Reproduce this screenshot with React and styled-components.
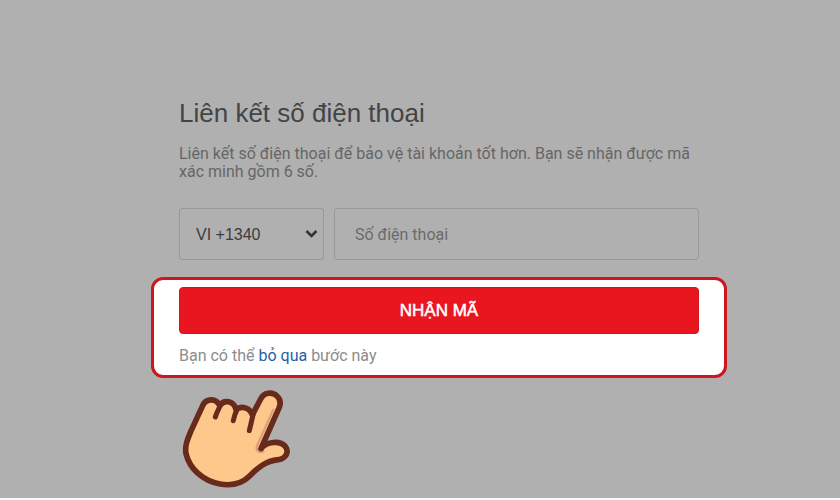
import { useState } from 'react'
import styled, { createGlobalStyle } from 'styled-components'

const GlobalStyle = createGlobalStyle`
  *, *::before, *::after {
    box-sizing: border-box;
  }
  body {
    margin: 0;
    background: #fbfbfb;
    font-family: "Liberation Sans", Arial, sans-serif;
    font-size: 16px;
    color: #666;
  }
`
const Page = styled.main`
  display: flex;
  justify-content: center;
  min-height: calc(100vh - 2px);
  padding: 97px 0 0 38px;
  background: #b0b0b0;
`
const Form = styled.form`
  width: 100%;
  max-width: 576px;
`
const Section = styled.div`
  padding: 0 28px;
`
const Title = styled.h1`
  margin: 0;
  font-size: 26px;
  font-weight: 400;
  line-height: 32px;
  color: #444446;
`
const Description = styled.p`
  margin: 16px 0 27px;
  font-family: Roboto, sans-serif;
  line-height: 18px;
`
const Fields = styled.div`
  display: flex;
  gap: 10px;
`
const SelectBox = styled.div`
  position: relative;
  flex: 0 0 145px;
  color: #3c3c3c;
`
const Select = styled.select`
  appearance: none;
  width: 100%;
  height: 52px;
  padding: 0 16px;
  border: 1px solid #989898;
  border-radius: 3px;
  background: transparent;
  color: inherit;
  font: inherit;
`
const Chevron = styled.svg`
  position: absolute;
  top: 21px;
  right: 6px;
  pointer-events: none;
`
const PhoneInput = styled.input`
  flex: 1;
  min-width: 0;
  height: 52px;
  padding: 0 20px;
  border: 1px solid #989898;
  border-radius: 4px;
  background: transparent;
  color: #3c3c3c;
  font: inherit;
  font-family: Roboto, sans-serif;

  &::placeholder {
    color: #6a6a6a;
    opacity: 1;
  }
`
const Highlight = styled(Section)`
  margin-top: 17px;
  padding: 7px 25px 9px;
  border: 3px solid #cb171d;
  border-radius: 12px;
  background: #fff;
`
const SubmitButton = styled.button`
  display: block;
  width: 100%;
  height: 47px;
  border: 1px solid #cf1620;
  border-radius: 4px;
  background: #ea161f;
  color: #fff;
  font: inherit;
  font-size: 17px;
  -webkit-text-stroke: 0.5px #fff;
  cursor: pointer;
`
const SkipText = styled.p`
  margin: 12px 0 0;
  font-family: Roboto, sans-serif;
  line-height: 20px;
  color: #8c8c8c;
`
const SkipLink = styled.a`
  color: #1f5fa8;
  text-decoration: none;
`
const Hand = styled.svg`
  display: block;
  margin: 11px 0 0 31px;
`

const PointingHand = () => (
  <Hand width="110" height="100" viewBox="36 24 330 300" aria-hidden="true">
    <path
      d="M97 76 C106 52 138 49 149 74 C162 54 192 59 198 86 C213 72 240 80 247 102 L272 54 C282 34 306 31 321 45 C333 56 332 69 327 81 L273 203 C290 181 330 178 346 196 C358 213 348 233 325 236 C285 240 262 262 238 286 C215 309 185 315 150 309 C98 300 58 262 48 218 C44 195 52 176 62 152 Z"
      fill="#fdc88b"
    />
    <path d="M310 86 L262 192 C256 208 264 217 280 211" fill="none" stroke="#e0a077" strokeWidth="7" strokeLinecap="round" />
    <g fill="none" stroke="#682a1b" strokeLinecap="round" strokeLinejoin="round">
      <path
        d="M97 76 C106 52 138 49 149 74 C162 54 192 59 198 86 C213 72 240 80 247 102 L272 54 C282 34 306 31 321 45 C333 56 332 69 327 81 L273 203 C290 181 330 178 346 196 C358 213 348 233 325 236 C285 240 262 262 238 286 C215 309 185 315 150 309 C98 300 58 262 48 218 C44 195 52 176 62 152 Z"
        strokeWidth="17"
      />
      <path d="M149 78 C144 88 139 97 136 108 M200 88 C195 98 192 108 190 119 M250 98 L238 149" strokeWidth="15" />
    </g>
  </Hand>
)

const App = () => {
  const [phone, setPhone] = useState('')

  return (
    <>
      <GlobalStyle />
      <Page>
        <Form onSubmit={(e) => e.preventDefault()}>
          <Section>
            <Title>Liên kết số điện thoại</Title>
            <Description>
              Liên kết số điện thoại để bảo vệ tài khoản tốt hơn. Bạn sẽ nhận được mã xác minh gồm 6 số.
            </Description>
            <Fields>
              <SelectBox>
                <Select aria-label="VI +1340" defaultValue="vi">
                  <option value="vi">VI +1340</option>
                </Select>
                <Chevron width="13" height="10" viewBox="0 0 13 10" aria-hidden="true">
                  <path d="M1.5 2 L6.5 7 L11.5 2" fill="none" stroke="#333" strokeWidth="2.6" />
                </Chevron>
              </SelectBox>
              <PhoneInput
                type="tel"
                aria-label="Số điện thoại"
                placeholder="Số điện thoại"
                value={phone}
                onChange={(e) => setPhone(e.target.value)}
              />
            </Fields>
          </Section>
          <Highlight>
            <SubmitButton type="submit">NHẬN MÃ</SubmitButton>
            <SkipText>
              Bạn có thể <SkipLink href="#skip">bỏ qua</SkipLink> bước này
            </SkipText>
          </Highlight>
          <PointingHand />
        </Form>
      </Page>
    </>
  )
}

export default App
